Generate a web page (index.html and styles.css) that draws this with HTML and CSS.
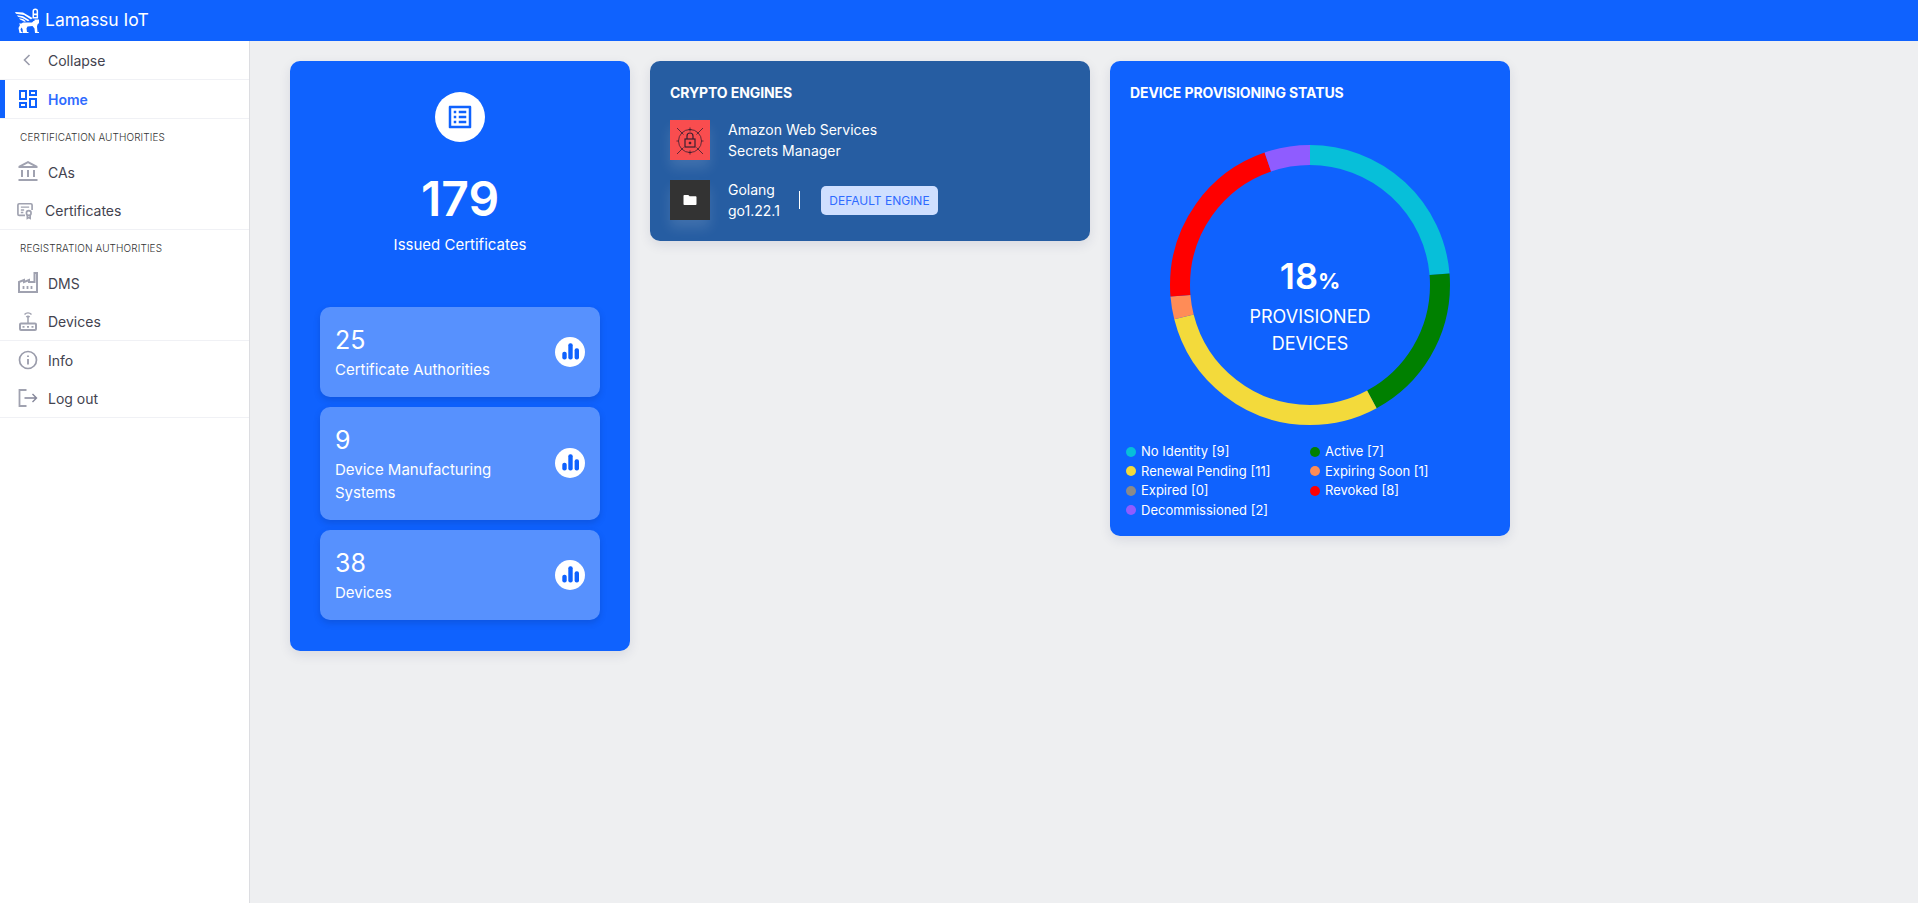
FILE: index.html
```html
<!DOCTYPE html>
<html lang="en">
<head>
    <meta charset="UTF-8">
    <title>Lamassu IoT</title>
    <link rel="stylesheet" href="styles.css">
</head>
<body>
    <header class="topbar">
        <svg class="logo" viewBox="0 0 25 26" width="25" height="26" fill="#fff">
            <!-- wings -->
            <path d="M0 5l8 .6 9.500 5.400-1.500 1.500-7-4.500L1 6.800zM2 8.200l6 1.100 6.500 4-1.500 1-5.500-3.200L3 9.800zM4 11.200l4 .8 3 2.200-1.500.6-2.800-1.500L5 12.600z"/>
            <!-- lion -->
            <path d="M4 16.500h2.500l1.500-1h9l1.500-1.500h1v-1.500h4.500v3.500l-1.500 1.500-.5 2 .5 5.500h1.500v1h-4l-.5-4.500-2-2.500-5 .5-1 2 .5 3.500h1.500v1H8l-.5-4-1-1.500-1 2 1 2.500h1v1H4.500L3.500 21l1.500-3z"/>
            <!-- padlock -->
            <path d="M17.500 11.500V4.200a2.800 2.800 0 0 1 5.600 0v7.300zm1.500-1.500h2.600V8.200H19zm0-3.500h2.600V4.200a1.300 1.300 0 0 0-2.600 0z" fill-rule="evenodd"/>
        </svg>
        <span class="brand">Lamassu IoT</span>
    </header>

    <div class="layout">
        <nav class="sidebar">
            <div class="nav-group">
                <a class="nav-item">
                    <svg class="nav-icon" viewBox="0 0 24 24" fill="none" stroke="#9a9cab" stroke-width="1.600"><path d="M13.500 7l-5 5 5 5"/></svg>
                    <span>Collapse</span>
                </a>
            </div>
            <div class="nav-group">
                <a class="nav-item active">
                    <svg class="nav-icon" viewBox="0 0 24 24" fill="#0f62fe"><path d="M19 5v2h-4V5h4M9 5v6H5V5h4m10 8v6h-4v-6h4M9 17v2H5v-2h4M21 3h-8v6h8V3zM11 3H3v10h8V3zm10 8h-8v10h8V11zm-10 4H3v6h8v-6z"/></svg>
                    <span>Home</span>
                </a>
            </div>
            <div class="nav-group">
                <div class="nav-label">Certification Authorities</div>
                <a class="nav-item">
                    <svg class="nav-icon" viewBox="0 0 24 24" fill="#a0a2b0"><path d="M7 10H5v7h2v-7zm6 0h-2v7h2v-7zm8.500 9H2.500v2h19v-2zM19 10h-2v7h2v-7zm-7-6.740L17.210 6H6.790L12 3.260M12 1L2.500 6v2h19V6L12 1z"/></svg>
                    <span>CAs</span>
                </a>
                <a class="nav-item cert-item">
                    <svg class="nav-icon" viewBox="0 0 24 24" fill="none" stroke="#a0a2b0" stroke-width="2"><path d="M12 18.500H5A1.500 1.500 0 0 1 3.500 17V6A1.500 1.500 0 0 1 5 4.500h14A1.500 1.500 0 0 1 20.500 6v6"/><path d="M7 8.500h10M7 12h4M7 15h3" stroke-width="1.600"/><circle cx="16.500" cy="15.500" r="2.800"/><path d="M14.800 18v4l1.700-1 1.700 1v-4"/></svg>
                    <span>Certificates</span>
                </a>
            </div>
            <div class="nav-group">
                <div class="nav-label">Registration Authorities</div>
                <a class="nav-item">
                    <svg class="nav-icon" viewBox="0 0 24 24" fill="none" stroke="#a0a2b0" stroke-width="2"><path d="M3 21V11l5-2v2l5-2v2h5.500V2H21v19z"/><path d="M7.500 15v3M11.500 15v3M15.500 15v3" stroke-width="1.800"/></svg>
                    <span>DMS</span>
                </a>
                <a class="nav-item">
                    <svg class="nav-icon" viewBox="0 0 24 24" fill="none" stroke="#a0a2b0" stroke-width="1.500"><rect x="4" y="14.500" width="16" height="6.500" rx="1" stroke-width="2"/><path d="M12 14V8M8.500 5.500a5 5 0 0 1 7 0M10.300 8a2.500 2.500 0 0 1 3.400 0"/><path d="M6.500 17.800h2M11 17.800h2M15.500 17.800h2" stroke-width="1.800"/></svg>
                    <span>Devices</span>
                </a>
            </div>
            <div class="nav-group">
                <a class="nav-item">
                    <svg class="nav-icon" viewBox="0 0 24 24" fill="none" stroke="#9a9cab" stroke-width="1.700"><circle cx="12" cy="12" r="8.500"/><path d="M12 11v5.500M12 7.500v1.500" stroke-width="1.800"/></svg>
                    <span>Info</span>
                </a>
                <a class="nav-item">
                    <svg class="nav-icon" viewBox="0 0 24 24" fill="none" stroke="#a0a2b0" stroke-width="1.800"><path d="M10.500 4H3.500v16h7"/><path d="M8.500 12h12M16.500 8l4 4-4 4" stroke="#85879a" stroke-width="1.400"/></svg>
                    <span>Log out</span>
                </a>
            </div>
        </nav>

        <main class="content">
            <section class="card issued">
                <div class="issued-top">
                    <div class="round-icon big">
                        <svg viewBox="0 0 24 24" width="30" height="30" fill="#0f62fe"><path d="M19 5v14H5V5h14m1.100-2H3.900c-.5 0-.9.4-.9.9v16.200c0 .4.4.9.9.9h16.200c.4 0 .9-.5.9-.9V3.900c0-.5-.5-.9-.9-.9zM11 7h6v2h-6V7zm0 4h6v2h-6v-2zm0 4h6v2h-6zM7 7h2v2H7zm0 4h2v2H7zm0 4h2v2H7z"/></svg>
                    </div>
                    <div class="issued-count">179</div>
                    <div class="issued-label">Issued Certificates</div>
                </div>
                <div class="tiles">
                    <div class="tile">
                        <div class="tile-text">
                            <div class="tile-num">25</div>
                            <div class="tile-label">Certificate Authorities</div>
                        </div>
                        <div class="round-icon"><svg viewBox="0 0 30 30" width="30" height="30" fill="#0f62fe"><rect x="7.300" y="14.700" width="4.400" height="7.700" rx="2"/><rect x="13.300" y="6.300" width="4.400" height="16.100" rx="2"/><rect x="19.600" y="11.300" width="4.400" height="11.100" rx="2"/></svg></div>
                    </div>
                    <div class="tile">
                        <div class="tile-text">
                            <div class="tile-num">9</div>
                            <div class="tile-label">Device Manufacturing Systems</div>
                        </div>
                        <div class="round-icon"><svg viewBox="0 0 30 30" width="30" height="30" fill="#0f62fe"><rect x="7.300" y="14.700" width="4.400" height="7.700" rx="2"/><rect x="13.300" y="6.300" width="4.400" height="16.100" rx="2"/><rect x="19.600" y="11.300" width="4.400" height="11.100" rx="2"/></svg></div>
                    </div>
                    <div class="tile">
                        <div class="tile-text">
                            <div class="tile-num">38</div>
                            <div class="tile-label">Devices</div>
                        </div>
                        <div class="round-icon"><svg viewBox="0 0 30 30" width="30" height="30" fill="#0f62fe"><rect x="7.300" y="14.700" width="4.400" height="7.700" rx="2"/><rect x="13.300" y="6.300" width="4.400" height="16.100" rx="2"/><rect x="19.600" y="11.300" width="4.400" height="11.100" rx="2"/></svg></div>
                    </div>
                </div>
            </section>

            <section class="card engines">
                <h2 class="card-title">Crypto Engines</h2>
                <div class="engine">
                    <div class="engine-icon aws">
                        <svg viewBox="0 0 40 40" width="40" height="40" fill="none" stroke="#3a2030" stroke-width="0.800">
                            <circle cx="20" cy="21" r="11.500"/>
                            <path d="M7 8l6.500 6.500M33 8l-6.500 6.500M7 34l6.500-6.500M33 34l-6.500-6.500M20 7.500v4M20 30.500v4M6.500 21h2M31.500 21h2M18.500 9.500h3M18.500 32.500h3"/>
                            <rect x="15" y="19" width="10" height="8" stroke-width="1.200"/>
                            <path d="M17 19v-3a3 3 0 0 1 6 0v3" stroke-width="1.200"/>
                            <circle cx="20" cy="23" r="1" fill="#3a2030"/>
                        </svg>
                    </div>
                    <div class="engine-text">Amazon Web Services<br>Secrets Manager</div>
                </div>
                <div class="engine">
                    <div class="engine-icon golang">
                        <svg viewBox="0 0 14 12" width="14" height="12" fill="#fff"><path d="M1.300 1h4l1.300 1.200h6.100c.4 0 .8.400.8.800v7.200c0 .4-.4.800-.8.800H1.300c-.4 0-.8-.4-.8-.8V1.800c0-.4.400-.8.800-.8z"/></svg>
                    </div>
                    <div class="engine-text">Golang<br>go1.22.1</div>
                    <div class="divider"></div>
                    <div class="chip">Default Engine</div>
                </div>
            </section>

            <section class="card status">
                <h2 class="card-title">Device Provisioning Status</h2>
                <div class="donut-wrap">
                    <svg class="donut" viewBox="0 0 280 280" width="280" height="280" fill="none" stroke-width="20">
                        <circle cx="140" cy="140" r="130" pathLength="38" stroke="#07bfd9" stroke-dasharray="9 29"/>
                        <circle cx="140" cy="140" r="130" pathLength="38" stroke="#008000" stroke-dasharray="7 31" stroke-dashoffset="-9"/>
                        <circle cx="140" cy="140" r="130" pathLength="38" stroke="#f3da3b" stroke-dasharray="11 27" stroke-dashoffset="-16"/>
                        <circle cx="140" cy="140" r="130" pathLength="38" stroke="#ff8c57" stroke-dasharray="1 37" stroke-dashoffset="-27"/>
                        <circle cx="140" cy="140" r="130" pathLength="38" stroke="#ff0000" stroke-dasharray="8 30" stroke-dashoffset="-28"/>
                        <circle cx="140" cy="140" r="130" pathLength="38" stroke="#8f5cff" stroke-dasharray="2 36" stroke-dashoffset="-36"/>
                    </svg>
                    <div class="donut-center">
                        <div class="donut-value">18<small>%</small></div>
                        <div class="donut-label">Provisioned<br>Devices</div>
                    </div>
                </div>
                <ul class="legend">
                    <li><i class="dot cyan"></i>No Identity [9]</li>
                    <li><i class="dot green"></i>Active [7]</li>
                    <li><i class="dot yellow"></i>Renewal Pending [11]</li>
                    <li><i class="dot orange"></i>Expiring Soon [1]</li>
                    <li><i class="dot grey"></i>Expired [0]</li>
                    <li><i class="dot red"></i>Revoked [8]</li>
                    <li><i class="dot purple"></i>Decommissioned [2]</li>
                </ul>
            </section>
        </main>
    </div>
</body>
</html>
```

FILE: styles.css
```css
* {
    box-sizing: border-box;
}
html, body {
    height: 100%;
}
body {
    margin: 0;
    font-family: 'Inter', sans-serif;
    font-size: 14px;
    background: #eeeff1;
    color: #43434f;
    overflow: hidden;
}
.topbar {
    height: 41px;
    background: #0f62fe;
    color: #fff;
    display: flex;
    align-items: center;
    padding: 0 0 13px 15px;
}
.logo {
    margin-top: 12px;
    margin-right: 5px;
}
.brand {
    font-size: 17.500px;
    margin-top: 11px;
}
.layout {
    display: flex;
    height: calc(100% - 41px);
}
.sidebar {
    width: 250px;
    flex-shrink: 0;
    background: #fff;
    border-right: 1px solid #dcdde1;
}
.nav-group {
    border-bottom: 1px solid #f0f1f5;
}
.nav-item {
    height: 38px;
    display: flex;
    align-items: center;
    padding-left: 16px;
    gap: 8px;
}
.nav-icon {
    width: 24px;
    height: 24px;
    flex-shrink: 0;
}
.cert-item {
    padding-left: 15px;
    gap: 10px;
}
.cert-item .nav-icon {
    width: 20px;
    height: 20px;
}
.active {
    color: #2f6bff;
    font-weight: 600;
    border-left: 5px solid #0f62fe;
    padding-left: 11px;
}
.nav-label {
    font-size: 10px;
    font-weight: 300;
    letter-spacing: 0.1px;
    text-transform: uppercase;
    color: #333;
    padding: 12px 0 9px 20px;
    line-height: 13px;
}
.content {
    flex: 1;
    display: flex;
    align-items: flex-start;
    gap: 20px;
    padding: 20px 40px;
}
.card {
    background: #0f62fe;
    color: #fff;
    border-radius: 10px;
    box-shadow: 0 4px 12px rgba(30,40,90,0.1);
}
.issued {
    width: 340px;
    height: 590px;
    padding: 31px 30px 0;
}
.issued-top {
    display: flex;
    flex-direction: column;
    align-items: center;
}
.round-icon {
    width: 30px;
    height: 30px;
    border-radius: 50%;
    background: #fff;
    flex-shrink: 0;
    display: flex;
    align-items: center;
    justify-content: center;
}
.round-icon.big {
    width: 50px;
    height: 50px;
}
.issued-count {
    font-size: 48px;
    font-weight: 600;
    line-height: 63px;
    margin-top: 25px;
}
.issued-label {
    font-size: 15px;
    line-height: 24px;
    margin-top: 3px;
}
.tiles {
    display: flex;
    flex-direction: column;
    gap: 10px;
    margin-top: 50px;
}
.tile {
    display: flex;
    align-items: center;
    justify-content: space-between;
    padding: 15px;
    background: rgba(255,255,255,0.3);
    border-radius: 10px;
    box-shadow: 0 3px 6px rgba(10,40,120,0.22);
}
.tile-text {
    width: 200px;
}
.tile-num {
    font-size: 25px;
    line-height: 37px;
}
.tile-label {
    font-size: 15px;
    line-height: 22.500px;
    padding-bottom: 0.500px;
}
.engines {
    width: 440px;
    height: 180px;
    background: #265da2;
    padding: 20px;
}
.card-title {
    margin: 0;
    font-size: 14px;
    font-weight: 700;
    letter-spacing: -0.100px;
    line-height: 24px;
    text-transform: uppercase;
}
.engine {
    display: flex;
    align-items: center;
    height: 40px;
    margin-top: 15px;
}
.engine + .engine {
    margin-top: 20px;
}
.engine-icon {
    width: 40px;
    height: 40px;
    margin-right: 18px;
    display: flex;
    align-items: center;
    justify-content: center;
    box-shadow: 0 8px 12px rgba(255,255,255,0.12);
}
.aws {
    background: #f94d4f;
}
.golang {
    background: #333;
}
.engine-text {
    line-height: 21px;
}
.divider {
    width: 1px;
    height: 18px;
    background: #fff;
    margin: 0 21px 0 19px;
}
.chip {
    background: #cfdfff;
    color: #2f6bff;
    font-size: 12px;
    line-height: 29px;
    padding: 0 8.500px;
    border-radius: 5px;
    text-transform: uppercase;
}
.status {
    width: 400px;
    height: 475px;
    padding: 20px 20px 0;
}
.donut-wrap {
    position: relative;
    width: 280px;
    height: 280px;
    margin: 40px auto 0;
}
.donut {
    display: block;
    transform: rotate(-90deg);
}
.donut-center {
    position: absolute;
    left: 0;
    right: 0;
    top: 109px;
    text-align: center;
}
.donut-value {
    font-size: 36px;
    font-weight: 600;
    line-height: 44px;
}
.donut-value small {
    font-size: 22px;
    font-weight: 700;
}
.donut-label {
    font-size: 18px;
    line-height: 27px;
    text-transform: uppercase;
}
.legend {
    list-style: none;
    margin: 17px 0 0 -4px;
    padding: 0;
    display: grid;
    grid-template-columns: 184px 1fr;
    font-size: 13px;
    line-height: 19.500px;
}
.legend li {
    display: flex;
    align-items: center;
}
.dot {
    width: 10px;
    height: 10px;
    border-radius: 50%;
    margin-right: 5px;
}
.cyan { background: #07bfd9; }
.green { background: #008000; }
.yellow { background: #f3da3b; }
.orange { background: #ff8c57; }
.grey { background: #8a8a8a; }
.red { background: #ff0000; }
.purple { background: #8f5cff; }
```
